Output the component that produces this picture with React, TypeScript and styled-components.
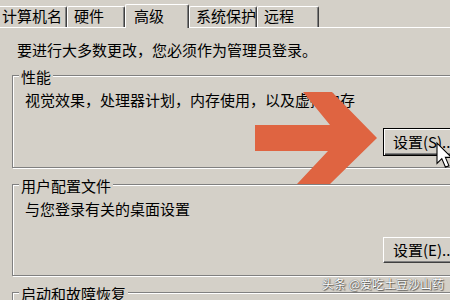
import styled, { createGlobalStyle, css } from "styled-components";

const FACE = "#d4d0c8";

const GlobalStyle = createGlobalStyle`
  html, body {
    margin: 0;
    padding: 0;
    overflow: hidden;
    background: ${FACE};
  }
  body {
    font-family: "Noto Sans CJK SC", "Noto Sans", sans-serif;
    font-size: 15px;
    color: #000;
  }
`;

const Page = styled.div`
  position: relative;
  width: 490px;
  height: 300px;
  overflow: hidden;
  background: ${FACE};
`;

const TabStrip = styled.div`
  display: flex;
  align-items: flex-end;
  height: 27px;
  border-bottom: 1px solid #fff;
`;

const Tab = styled.div<{ $w: number; $selected?: boolean; $first?: boolean }>`
  box-sizing: border-box;
  width: ${(p) => p.$w}px;
  height: 21px;
  padding: 0 0 2px 6px;
  line-height: 18px;
  white-space: nowrap;
  background: ${FACE};
  border-top: 1px solid #fff;
  border-left: 1px solid #fff;
  border-right: 1px solid #404040;
  border-radius: 2px 2px 0 0;
  box-shadow: inset -1px 0 0 #808080;

  ${(p) => p.$first && css`
    margin-left: -5px;
  `}

  ${(p) => p.$selected && css`
    height: 24px;
    margin-bottom: -1px;
    padding: 0 0 1px 8px;
    line-height: 22px;
  `}
`;

const Panel = styled.div`
  padding: 12px 0 0 12px;
`;

const Intro = styled.div`
  margin-left: 5px;
  line-height: 20px;
`;

const Group = styled.div<{ $h: number; $gap: number }>`
  box-sizing: border-box;
  width: 466px;
  height: ${(p) => p.$h}px;
  margin-top: ${(p) => p.$gap}px;
  padding-left: 12px;
  border: 1px solid #808080;
  box-shadow: 1px 1px 0 #fff, inset 1px 1px 0 #fff;
`;

const Legend = styled.div`
  width: fit-content;
  margin: -9px 0 0 -6px;
  padding: 0 2px;
  line-height: 20px;
  background: ${FACE};
`;

const GroupText = styled.div`
  margin-top: 3px;
  line-height: 20px;
`;

const ButtonRow = styled.div`
  display: flex;
  justify-content: flex-end;
  margin-top: 18px;
  padding-right: 12px;
`;

const Button = styled.button<{ $default?: boolean }>`
  box-sizing: border-box;
  width: 82px;
  height: 26px;
  padding: 0 0 0 9px;
  text-align: left;
  white-space: nowrap;
  overflow: hidden;
  font: inherit;
  line-height: 22px;
  color: #000;
  background: ${FACE};
  border: 1px solid;
  border-color: #fff #404040 #404040 #fff;
  box-shadow: inset -1px -1px 0 #808080;

  ${(p) => p.$default && css`
    height: 28px;
    line-height: 26px;
    border-color: #000;
    box-shadow: inset 1px 1px 0 #fff, inset -1px -1px 0 #404040, inset -2px -2px 0 #808080;
  `}
`;

const Overlay = styled.svg`
  position: absolute;
  left: 0;
  top: 0;
  pointer-events: none;
`;

const Watermark = styled.div`
  position: absolute;
  left: 322px;
  top: 276px;
  font-size: 12px;
  line-height: 16px;
  color: #fff;
  white-space: nowrap;
  text-shadow: 0 0 1px #333, 1px 1px 1px rgba(0, 0, 0, 0.55);
`;

const tabs = [
  { label: "计算机名", w: 72 },
  { label: "硬件", w: 58 },
  { label: "高级", w: 64, selected: true },
  { label: "系统保护", w: 68 },
  { label: "远程", w: 62 },
];

function App() {
  return (
    <Page>
      <GlobalStyle />
      <TabStrip>
        {tabs.map((t, i) => (
          <Tab key={t.label} $w={t.w} $selected={t.selected} $first={i === 0}>
            {t.label}
          </Tab>
        ))}
      </TabStrip>
      <Panel>
        <Intro>要进行大多数更改，您必须作为管理员登录。</Intro>
        <Group $h={93} $gap={15}>
          <Legend>性能</Legend>
          <GroupText>视觉效果，处理器计划，内存使用，以及虚拟内存</GroupText>
          <ButtonRow>
            <Button $default>设置(S)...</Button>
          </ButtonRow>
        </Group>
        <Group $h={92} $gap={16}>
          <Legend>用户配置文件</Legend>
          <GroupText>与您登录有关的桌面设置</GroupText>
          <ButtonRow>
            <Button>设置(E)...</Button>
          </ButtonRow>
        </Group>
        <Group $h={40} $gap={16}>
          <Legend>启动和故障恢复</Legend>
        </Group>
      </Panel>

      <Overlay width="450" height="300" viewBox="0 0 450 300">
        <polygon
          fill="#df6441"
          points="255,125 330,125 303,92 332,92 377,138 330,184 297,184 328,151 255,151"
        />
        <g transform="translate(437 143) scale(1.2)">
          <polygon
            points="0,0 0,17 4,13 7,20 10,19 7,12 12,12"
            fill="#fff"
            stroke="#000"
            strokeWidth="0.9"
            strokeLinejoin="miter"
          />
        </g>
      </Overlay>
      <Watermark>头条 @爱吃土豆沙山药</Watermark>
    </Page>
  );
}

export default App;
